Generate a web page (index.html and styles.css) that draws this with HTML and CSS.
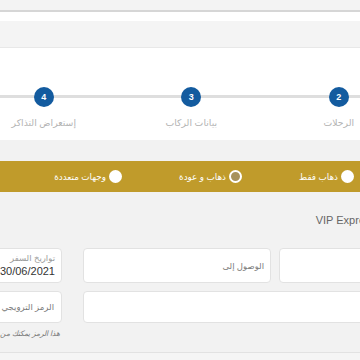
FILE: index.html
```html
<!DOCTYPE html>
<html lang="ar">
<head>
    <meta charset="UTF-8">
    <meta name="viewport" content="width=device-width, initial-scale=1.0">
    <title>حجز التذاكر</title>
    <link rel="stylesheet" href="styles.css">
</head>
<body>
    <div class="topbar"></div>
    <div class="subbar"></div>

    <div class="steps-wrap">
        <ol class="steps">
            <li class="step"><span class="step-num">1</span><span class="step-label">البحث</span></li>
            <li class="step"><span class="step-num">2</span><span class="step-label">الرحلات</span></li>
            <li class="step"><span class="step-num">3</span><span class="step-label">بيانات الركاب</span></li>
            <li class="step"><span class="step-num">4</span><span class="step-label">إستعراض التذاكر</span></li>
        </ol>
    </div>

    <main class="booking">
        <div class="trip-types">
            <label class="trip-type"><span class="radio"></span>ذهاب فقط</label>
            <label class="trip-type"><span class="radio checked"></span>ذهاب و عودة</label>
            <label class="trip-type"><span class="radio"></span>وجهات متعددة</label>
        </div>

        <div class="form">
            <div class="form-title">VIP Express</div>

            <div class="form-row">
                <div class="route">
                    <div class="field field-from"></div>
                    <div class="field field-to">
                        <span class="placeholder">الوصول إلى</span>
                    </div>
                </div>
                <div class="field field-date">
                    <span class="field-label">تواريخ السفر</span>
                    <span class="field-value">30/06/2021</span>
                </div>
            </div>

            <div class="form-row">
                <div class="field field-wide"></div>
                <div class="promo">
                    <div class="field field-promo">
                        <span class="placeholder">الرمز الترويجي</span>
                    </div>
                    <div class="hint">هذا الرمز يمكنك من الحصول على خصم</div>
                </div>
            </div>
        </div>

        <div class="footer"></div>
    </main>
</body>
</html>
```

FILE: styles.css
```css
* {
    margin: 0;
    padding: 0;
    box-sizing: border-box;
}

html, body {
    width: 360px;
    height: 360px;
    overflow: hidden;
}

body {
    font-family: "Liberation Sans", "DejaVu Sans", sans-serif;
    background: #fff;
}

.topbar {
    height: 12px;
    background: #f3f3f3;
    border-bottom: 2px solid #d6d6d6;
}

.subbar {
    margin-top: 9px;
    height: 27px;
    background: #f4f4f4;
    border-bottom: 1px solid #e8e8e8;
}

.steps-wrap {
    height: 92px;
}

.steps {
    position: relative;
    list-style: none;
    display: flex;
    direction: rtl;
    width: 590px;
    margin-left: -30px;
    padding-top: 39px;
}

.steps::before {
    content: "";
    position: absolute;
    top: 47px;
    left: 0;
    right: 0;
    height: 3px;
    background: #dedede;
}

.step {
    position: relative;
    width: 147.5px;
    display: flex;
    flex-direction: column;
    align-items: center;
}

.step-num {
    width: 20px;
    height: 20px;
    border-radius: 50%;
    background: #135b9f;
    color: #fff;
    font-size: 9px;
    font-weight: bold;
    line-height: 20px;
    text-align: center;
}

.step-label {
    margin-top: 10px;
    font-size: 9.3px;
    line-height: 12px;
    color: #b3b3b3;
}

.booking {
    background: #f2f2f2;
    padding-top: 21px;
    height: 220px;
}

.trip-types {
    height: 31px;
    background: #c09b2b;
    display: flex;
    direction: rtl;
    align-items: center;
    gap: 57px;
    padding-right: 6px;
}

.trip-type {
    display: flex;
    align-items: center;
    gap: 3px;
    color: #fff;
    font-size: 8.8px;
}

.radio {
    width: 13px;
    height: 13px;
    border-radius: 50%;
    background: #fff;
}

.radio.checked {
    border: 2.5px solid #fff;
    background: #a8925c;
}

.form {
    direction: rtl;
    width: 440px;
    margin-left: -60px;
}

.form-title {
    padding: 21px 4px 0 0;
    height: 56px;
    font-size: 11px;
    line-height: 14px;
    color: #666;
}

.form-row {
    display: flex;
    gap: 21px;
    margin-bottom: 8px;
}

.route {
    display: flex;
    gap: 8px;
    width: 297px;
}

.field {
    background: #fff;
    border: 1px solid #e2e2e2;
    border-radius: 4px;
    height: 35px;
    padding: 0 6px;
    display: flex;
    flex-direction: column;
    justify-content: center;
}

.field-from {
    width: 101px;
}

.field-to {
    width: 188px;
}

.field-date {
    width: 122px;
    justify-content: flex-start;
    padding-top: 3px;
}

.field-wide {
    width: 297px;
    height: 32px;
}

.promo {
    width: 122px;
}

.field-promo {
    height: 32px;
    padding-right: 7px;
}

.field-label {
    font-size: 8.5px;
    line-height: 12px;
    color: #9a9a9a;
}

.field-value {
    direction: ltr;
    text-align: right;
    font-size: 11px;
    line-height: 15px;
    color: #333;
}

.placeholder {
    font-size: 8.5px;
    color: #7a7a7a;
}

.hint {
    margin-top: 5px;
    padding-right: 2px;
    font-size: 7.5px;
    line-height: 12px;
    font-style: italic;
    color: #777;
    white-space: nowrap;
}

.footer {
    margin-top: 12px;
    border-top: 1px solid #e2e2e2;
    height: 20px;
    background: #f5f5f5;
}
```
